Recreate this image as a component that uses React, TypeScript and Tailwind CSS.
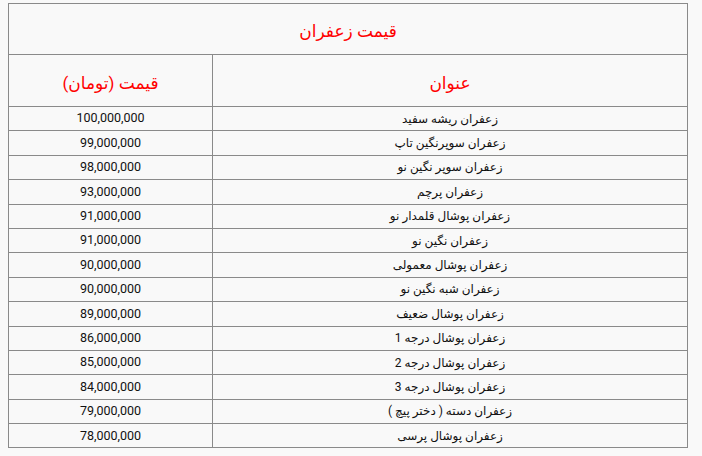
const rows: [string, string][] = [
  ["زعفران ریشه سفید", "100,000,000"],
  ["زعفران سوپرنگین تاپ", "99,000,000"],
  ["زعفران سوپر نگین نو", "98,000,000"],
  ["زعفران پرچم", "93,000,000"],
  ["زعفران پوشال قلمدار نو", "91,000,000"],
  ["زعفران نگین نو", "91,000,000"],
  ["زعفران پوشال معمولی", "90,000,000"],
  ["زعفران شبه نگین نو", "90,000,000"],
  ["زعفران پوشال ضعیف", "89,000,000"],
  ["زعفران پوشال درجه 1", "86,000,000"],
  ["زعفران پوشال درجه 2", "85,000,000"],
  ["زعفران پوشال درجه 3", "84,000,000"],
  ["زعفران دسته ( دختر پیچ )", "79,000,000"],
  ["زعفران پوشال پرسی", "78,000,000"],
]

export default function App() {
  return (
    <div className="min-h-[456px] w-[702px] bg-[#f9f9f9] pl-[8px] pt-[3px] font-['Roboto','DejaVu_Sans',sans-serif] text-[#111]">
      <table dir="rtl" className="w-[679px] table-fixed border-collapse border border-[#8a8a8a]">
        <colgroup>
          <col className="w-[475px]" />
          <col className="w-[204px]" />
        </colgroup>
        <thead>
          <tr className="h-[51px]">
            <th colSpan={2} className="border border-[#8a8a8a] pt-[6px] text-center text-[17px] font-normal text-[#ff0000]">
              قیمت زعفران
            </th>
          </tr>
          <tr className="h-[52px]">
            <th className="border border-[#8a8a8a] pt-[6px] text-center text-[17px] font-normal text-[#ff0000]">
              عنوان
            </th>
            <th className="border border-[#8a8a8a] pt-[6px] text-center text-[17px] font-normal text-[#ff0000]">
              قیمت (تومان)
            </th>
          </tr>
        </thead>
        <tbody>
          {rows.map(([title, price], i) => (
            <tr key={i} className="h-[24.4px]">
              <td className="border border-[#8a8a8a] p-0 text-center text-[12px] leading-none">{title}</td>
              <td className="border border-[#8a8a8a] p-0 text-center text-[12.5px] leading-none">
                <span dir="ltr">{price}</span>
              </td>
            </tr>
          ))}
        </tbody>
      </table>
    </div>
  )
}
